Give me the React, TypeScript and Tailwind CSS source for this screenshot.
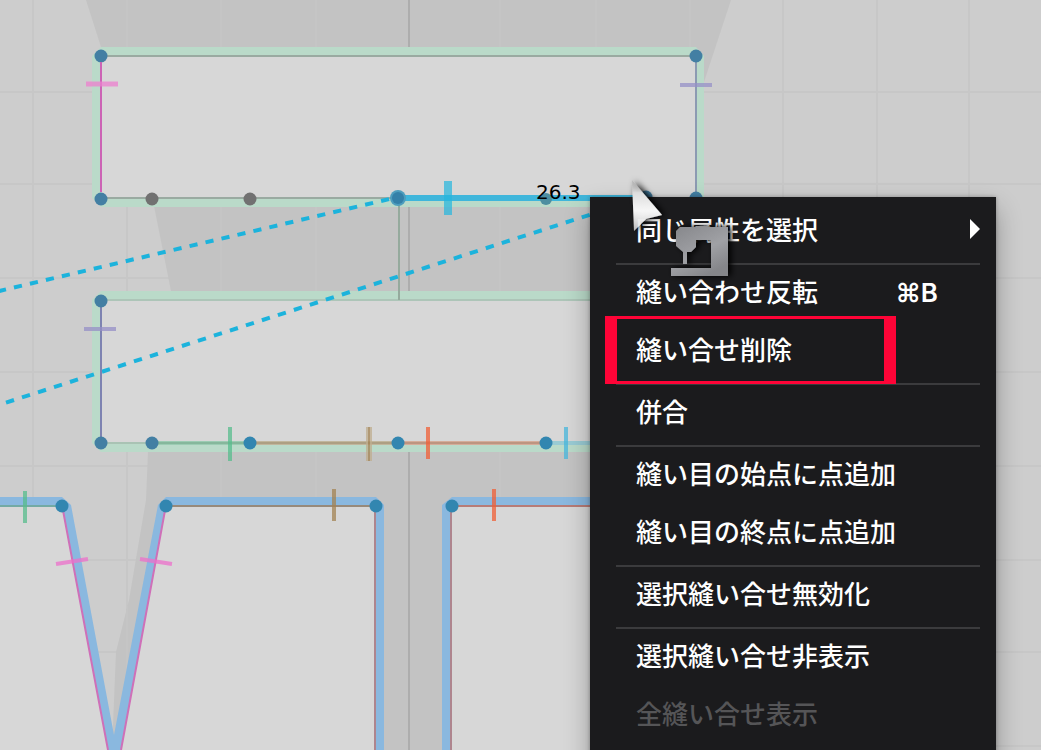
import React from "react";

interface MenuEntry {
  label: string;
  shortcut?: string;
  submenu?: boolean;
  disabled?: boolean;
  highlighted?: boolean;
  dividerAfter?: boolean;
}

const MENU: MenuEntry[] = [
  { label: "同じ属性を選択", submenu: true, dividerAfter: true },
  { label: "縫い合わせ反転", shortcut: "⌘B" },
  { label: "縫い合せ削除", highlighted: true, dividerAfter: true },
  { label: "併合", dividerAfter: true },
  { label: "縫い目の始点に点追加" },
  { label: "縫い目の終点に点追加", dividerAfter: true },
  { label: "選択縫い合せ無効化", dividerAfter: true },
  { label: "選択縫い合せ非表示" },
  { label: "全縫い合せ表示", disabled: true },
];

const GRID_X = [33, 127, 221, 316, 500, 596, 690, 783, 877, 969];
const GRID_Y = [92, 184, 278, 372, 466, 560, 652, 746];

// Corner and seam points of the pattern pieces
const POINTS: [number, number, string][] = [
  [101, 56, "#437fa3"],
  [696, 56, "#437fa3"],
  [101, 199, "#437fa3"],
  [696, 198, "#437fa3"],
  [646, 197, "#437fa3"],
  [152, 199, "#717171"],
  [250, 199, "#717171"],
  [101, 301, "#437fa3"],
  [101, 443, "#437fa3"],
  [152, 443, "#437fa3"],
  [250, 443, "#3286b0"],
  [398, 443, "#3286b0"],
  [546, 443, "#3286b0"],
  [62, 506, "#3286b0"],
  [166, 506, "#3286b0"],
  [376, 506, "#3286b0"],
  [452, 506, "#3286b0"],
];

const AVATAR =
  "M86 0 101 47 154 206 171 291 148 452 146 500 129 600 116 652 112 750H700L650 300 703 85 731 0Z";

function PatternCanvas() {
  return (
    <svg className="absolute inset-0 h-full w-full" aria-hidden="true">
      <defs>
        <clipPath id="avatar">
          <path d={AVATAR} />
        </clipPath>
      </defs>

      {/* Grid and avatar silhouette */}
      <g stroke="#c7c7c7" strokeWidth="2">
        {GRID_X.map((x) => (
          <line key={x} x1={x} x2={x} y1="0" y2="100%" />
        ))}
        {GRID_Y.map((y) => (
          <line key={y} x1="0" x2="100%" y1={y} y2={y} />
        ))}
      </g>
      <path d={AVATAR} fill="#c3c3c3" />
      <g stroke="#c5c5c5" strokeWidth="2" clipPath="url(#avatar)">
        {GRID_X.map((x) => (
          <line key={x} x1={x} x2={x} y1="0" y2="100%" />
        ))}
      </g>
      <path d="M409 0V750" stroke="#adadad" strokeWidth="2" />

      {/* Upper waistband */}
      <path d="M101 47H696L704 56V198L696 207H101L92 198V56Z" fill="#badac9" />
      <path d="M101 56H696V198H101Z" fill="#d7d7d7" />
      <path d="M101 56H696M101 198H398" stroke="#9aaaa1" strokeWidth="2" />
      <path d="M696 56V198" stroke="#8c9ab2" strokeWidth="2" />

      {/* Lower waistband */}
      <path d="M101 291H696L704 300V443L696 452H101L92 443V300Z" fill="#badac9" />
      <path d="M101 301H696V443H101Z" fill="#d7d7d7" />
      <path d="M101 300H696" stroke="#adc5b8" strokeWidth="2" />
      <path d="M399 198V300" stroke="#95aa9d" strokeWidth="2" />
      <path d="M101 443H152" stroke="#a9c3b4" strokeWidth="2" />
      <path d="M152 443H250" stroke="#9ccbb3" strokeWidth="4" />
      <path d="M250 443H398" stroke="#c1b69d" strokeWidth="4" />
      <path d="M398 443H546" stroke="#d5ad9a" strokeWidth="4" />
      <path d="M546 443H696" stroke="#99cbd4" strokeWidth="4" />
      <path d="M152 443H250" stroke="#86b79c" strokeWidth="2" />
      <path d="M250 443H398" stroke="#ad9f83" strokeWidth="2" />
      <path d="M398 443H546" stroke="#bd9581" strokeWidth="2" />

      {/* Front and back panels */}
      <path d="M0 497H62L71 505 114 735 158 505 166 497H376L384 505V750H0Z" fill="#8ab8df" />
      <path d="M0 506H62L108 750H0ZM166 506H375V750H121Z" fill="#d7d7d7" />
      <path d="M700 497H452L442 505V750H700Z" fill="#8ab8df" />
      <path d="M700 506H452V750H700Z" fill="#d7d7d7" />
      <path d="M62 505 108 750M166 505 121 750" stroke="#cf70b8" strokeWidth="2" fill="none" />
      <path d="M0 506H62" stroke="#73aaa4" strokeWidth="2" />
      <path d="M166 506H376" stroke="#978a7b" strokeWidth="2" />
      <path d="M452 506H700" stroke="#b77c77" strokeWidth="2" />
      <path d="M375 505V750M451 505V750" stroke="#ae858e" strokeWidth="2" />

      {/* Links between the two selected seams */}
      <g stroke="#1cb3dc" strokeWidth="4">
        <path d="M-2 291.3 398 197" strokeDasharray="8.2 8.2" />
        <path d="M6 402.6 600 211.5" strokeDasharray="8.4 8.4" />
      </g>
      <path d="M101 301V443" stroke="#7e83b1" strokeWidth="2" />

      <path d="M398 198H646" stroke="#3fb6db" strokeWidth="6" />
      <circle cx="546" cy="199" r="6" fill="#4d8ea0" />
      <path d="M448 181V215" stroke="#24b7df" strokeWidth="8" opacity="0.7" />

      {POINTS.map(([x, y, fill]) => (
        <circle key={`${x}-${y}`} cx={x} cy={y} r="6.5" fill={fill} />
      ))}
      <circle cx="398" cy="198" r="8" fill="#4d9dbd" />
      <circle cx="398" cy="198" r="6" fill="#3480a8" />
      <path d="M101 62V192" stroke="#cc63b5" strokeWidth="2" />

      {/* Notches */}
      <g fill="none" opacity="0.75">
        <path d="M86 84H118" stroke="#ed80cf" strokeWidth="5" />
        <path d="M680 85H712M84 329H116" stroke="#9690c7" strokeWidth="4" />
        <path d="M56 564 88 559M140 559 172 564" stroke="#ed70cb" strokeWidth="4" />
        <path d="M230 427V461M25 491V523" stroke="#57bd8d" strokeWidth="4" />
        <path d="M369 427V461" stroke="#bfae90" strokeWidth="6" />
        <path d="M369 427V461" stroke="#a38354" strokeWidth="2" />
        <path d="M334 489V521" stroke="#a38354" strokeWidth="4" />
        <path d="M428 427V459M494 489V521" stroke="#f15f36" strokeWidth="4" />
        <path d="M566 427V459" stroke="#47b7dd" strokeWidth="4" />
      </g>

      <text x="536" y="199" className="fill-black font-['DejaVu_Sans',sans-serif] text-[20px]">
        26.3
      </text>
    </svg>
  );
}

function SewingCursor() {
  return (
    <svg
      className="pointer-events-none absolute left-[620px] top-[170px] z-20 h-[120px] w-[130px]"
      viewBox="620 170 130 120"
      aria-hidden="true"
    >
      <defs>
        <linearGradient id="arrow" x1="0" y1="0" x2="0" y2="1">
          <stop offset="0" stopColor="#999999" stopOpacity="0.4" />
          <stop offset="0.25" stopColor="#dddddd" />
          <stop offset="0.6" stopColor="#f6f6f6" />
          <stop offset="1" stopColor="#f6f6f6" stopOpacity="0.7" />
        </linearGradient>
        <linearGradient id="machine" x1="0" y1="0" x2="0.6" y2="1">
          <stop offset="0" stopColor="#85868a" />
          <stop offset="0.6" stopColor="#a0a1a5" />
          <stop offset="1" stopColor="#85868a" />
        </linearGradient>
        <filter id="shade" x="-30%" y="-30%" width="170%" height="170%">
          <feGaussianBlur in="SourceGraphic" stdDeviation="0.7" result="soft" />
          <feOffset in="SourceAlpha" dx="3" dy="0" />
          <feGaussianBlur stdDeviation="3" result="shadow" />
          <feMerge>
            <feMergeNode in="shadow" />
            <feMergeNode in="soft" />
          </feMerge>
        </filter>
      </defs>
      <path d="M632 180 662 215 646 219 634 231Z" fill="url(#arrow)" filter="url(#shade)" />
      <path
        d="M680 227H728V276H671V268H711V240H696V247L691 252H687V264H683V252L676 246V231Z"
        fill="url(#machine)"
        filter="url(#shade)"
      />
    </svg>
  );
}

function MenuRow({ item }: { item: MenuEntry }) {
  return (
    <li role="none" className="relative flex flex-col">
      <button
        type="button"
        role="menuitem"
        disabled={item.disabled}
        className="flex h-[58px] items-center pb-1.5 pl-[46px] pr-4 text-left text-[26px] leading-8 font-medium whitespace-nowrap text-white disabled:text-[#555557]"
      >
        <span className="flex-1">{item.label}</span>
        {item.shortcut && (
          <kbd className="mr-[42px] pt-1 font-['Inter','DejaVu_Sans',sans-serif] text-[26px] font-semibold">
            {item.shortcut}
          </kbd>
        )}
        {item.submenu && (
          <svg className="h-5 w-[10px] fill-white" viewBox="0 0 10 20" aria-hidden="true">
            <path d="M0 0 10 10 0 20Z" />
          </svg>
        )}
      </button>
      {item.highlighted && (
        <span className="pointer-events-none absolute -top-[7px] left-[15px] z-10 h-[68px] w-[291px] border-x-12 border-y-3 border-[#ff0437]" />
      )}
      {item.dividerAfter && (
        <div role="separator" className="mr-4 ml-[26px] h-1 border-b-2 border-[#3b3b3d]" />
      )}
    </li>
  );
}

export default function App() {
  return (
    <main className="relative h-screen w-full overflow-hidden bg-[#cdcdcd] font-['Noto_Sans_CJK_JP',sans-serif]">
      <PatternCanvas />
      <ul
        role="menu"
        className="absolute left-[590px] top-[197px] z-10 flex w-[406px] flex-col bg-[#1b1b1d] pt-1.5 pb-6 shadow-[0_12px_24px_rgba(0,0,0,0.3),0_0_4px_rgba(0,0,0,0.3)]"
      >
        {MENU.map((item) => (
          <MenuRow key={item.label} item={item} />
        ))}
      </ul>
      <SewingCursor />
    </main>
  );
}
